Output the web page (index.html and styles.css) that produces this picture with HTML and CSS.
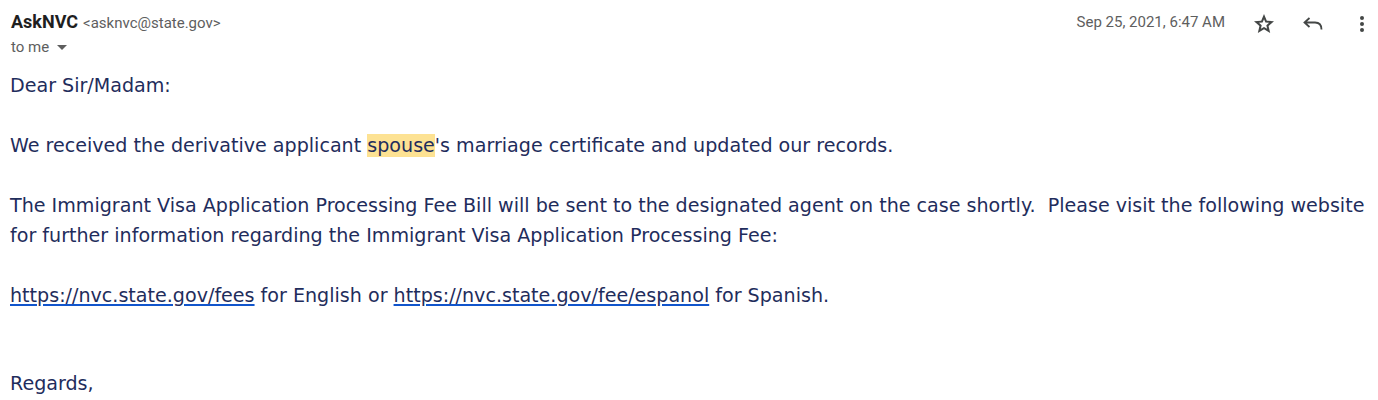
FILE: index.html
```html
<!DOCTYPE html>
<html lang="en">
<head>
<meta charset="utf-8">
<title>AskNVC</title>
<link rel="stylesheet" href="styles.css">
</head>
<body>
<div class="message">
  <header class="msg-header">
    <div class="sender-block">
      <div class="sender-line">
        <span class="sender-name">AskNVC</span>
        <span class="sender-email">&lt;asknvc@state.gov&gt;</span>
      </div>
      <div class="recipient-line">
        <span class="to-me">to me</span>
        <span class="caret"></span>
      </div>
    </div>
    <div class="actions">
      <span class="date">Sep 25, 2021, 6:47 AM</span>
      <span class="icon-btn star" aria-label="Star">
        <svg viewBox="0 -960 960 960" width="24" height="24"><path d="m354-287 126-76 126 77-33-144 111-96-146-13-57-136-57 135-146 13 111 97-33 143ZM233-120l65-281L80-590l288-25 112-265 112 265 288 25-218 189 65 281-247-149-247 149Z"/></svg>
      </span>
      <span class="icon-btn reply" aria-label="Reply">
        <svg viewBox="0 0 20 13" width="20" height="13"><path d="M6.5 1 L1.5 5.5 L6.5 10 M1.5 5.5 H12 Q18.5 5.5 18.5 12.5" fill="none" stroke-width="1.8" stroke-linejoin="miter"/></svg>
      </span>
      <span class="icon-btn more" aria-label="More">
        <svg viewBox="0 0 6 18" width="6" height="18"><circle cx="3" cy="3" r="2"/><circle cx="3" cy="9" r="2"/><circle cx="3" cy="15" r="2"/></svg>
      </span>
    </div>
  </header>
  <div class="msg-body">
    <p class="gap1">Dear Sir/Madam:</p>
    <p class="gap1">We received the derivative applicant <span class="hl">spouse</span>'s marriage certificate and updated our records.</p>
    <p class="gap1">The Immigrant Visa Application Processing Fee Bill will be sent to the designated agent on the case shortly.&nbsp; Please visit the following website for further information regarding the Immigrant Visa Application Processing Fee:</p>
    <p class="gap2"><a href="#">https://nvc.state.gov/fees</a> for English or <a href="#">https://nvc.state.gov/fee/espanol</a> for Spanish.</p>
    <p>Regards,</p>
  </div>
</div>
</body>
</html>
```
FILE: styles.css
```css
html, body {
  margin: 0;
  padding: 0;
  background: #ffffff;
}

.message {
  width: 1378px;
}

.msg-header {
  display: flex;
  justify-content: space-between;
  align-items: flex-start;
  padding: 10px 0 0 11px;
  font-family: Roboto, "Liberation Sans", sans-serif;
}

.sender-line {
  display: flex;
  align-items: baseline;
  gap: 5px;
  height: 24px;
  line-height: 24px;
}

.sender-name {
  font-size: 18px;
  font-weight: 700;
  color: #1f1f1f;
}

.sender-email {
  font-size: 15px;
  color: #5e5e5e;
}

.recipient-line {
  display: flex;
  align-items: center;
  gap: 8px;
  margin-top: 3px;
  height: 20px;
  line-height: 20px;
}

.to-me {
  font-size: 15px;
  color: #5e5e5e;
}

.caret {
  width: 0;
  height: 0;
  border-left: 5px solid transparent;
  border-right: 5px solid transparent;
  border-top: 5px solid #5e5e5e;
  margin-top: 1px;
}

.actions {
  display: flex;
  align-items: center;
  height: 24px;
  padding-right: 4px;
}

.date {
  font-size: 15px;
  line-height: 24px;
  color: #5e5e5e;
  margin-right: 26px;
}

.icon-btn {
  display: flex;
  align-items: center;
  justify-content: center;
  width: 25px;
  height: 25px;
  margin-top: 3px;
}

.icon-btn + .icon-btn {
  margin-left: 24px;
}

.icon-btn svg {
  fill: #444746;
  stroke: #444746;
}

.star svg {
  stroke: none;
}

.reply svg {
  fill: none;
}

.more svg {
  stroke: none;
}

.msg-body {
  margin-top: 14px;
  padding-left: 10px;
  font-family: "DejaVu Sans", sans-serif;
  font-size: 19.1px;
  line-height: 30px;
  color: #1f2d5c;
}

.msg-body p {
  margin: 0;
}

.msg-body p.gap1 {
  margin-bottom: 30px;
}

.msg-body p.gap2 {
  margin-bottom: 58px;
}

.hl {
  background: #fde293;
}

.msg-body a {
  color: #1f2d5c;
  text-decoration: underline;
  text-decoration-color: #1155cc;
  text-decoration-thickness: 2px;
  text-underline-offset: 2px;
}
```
